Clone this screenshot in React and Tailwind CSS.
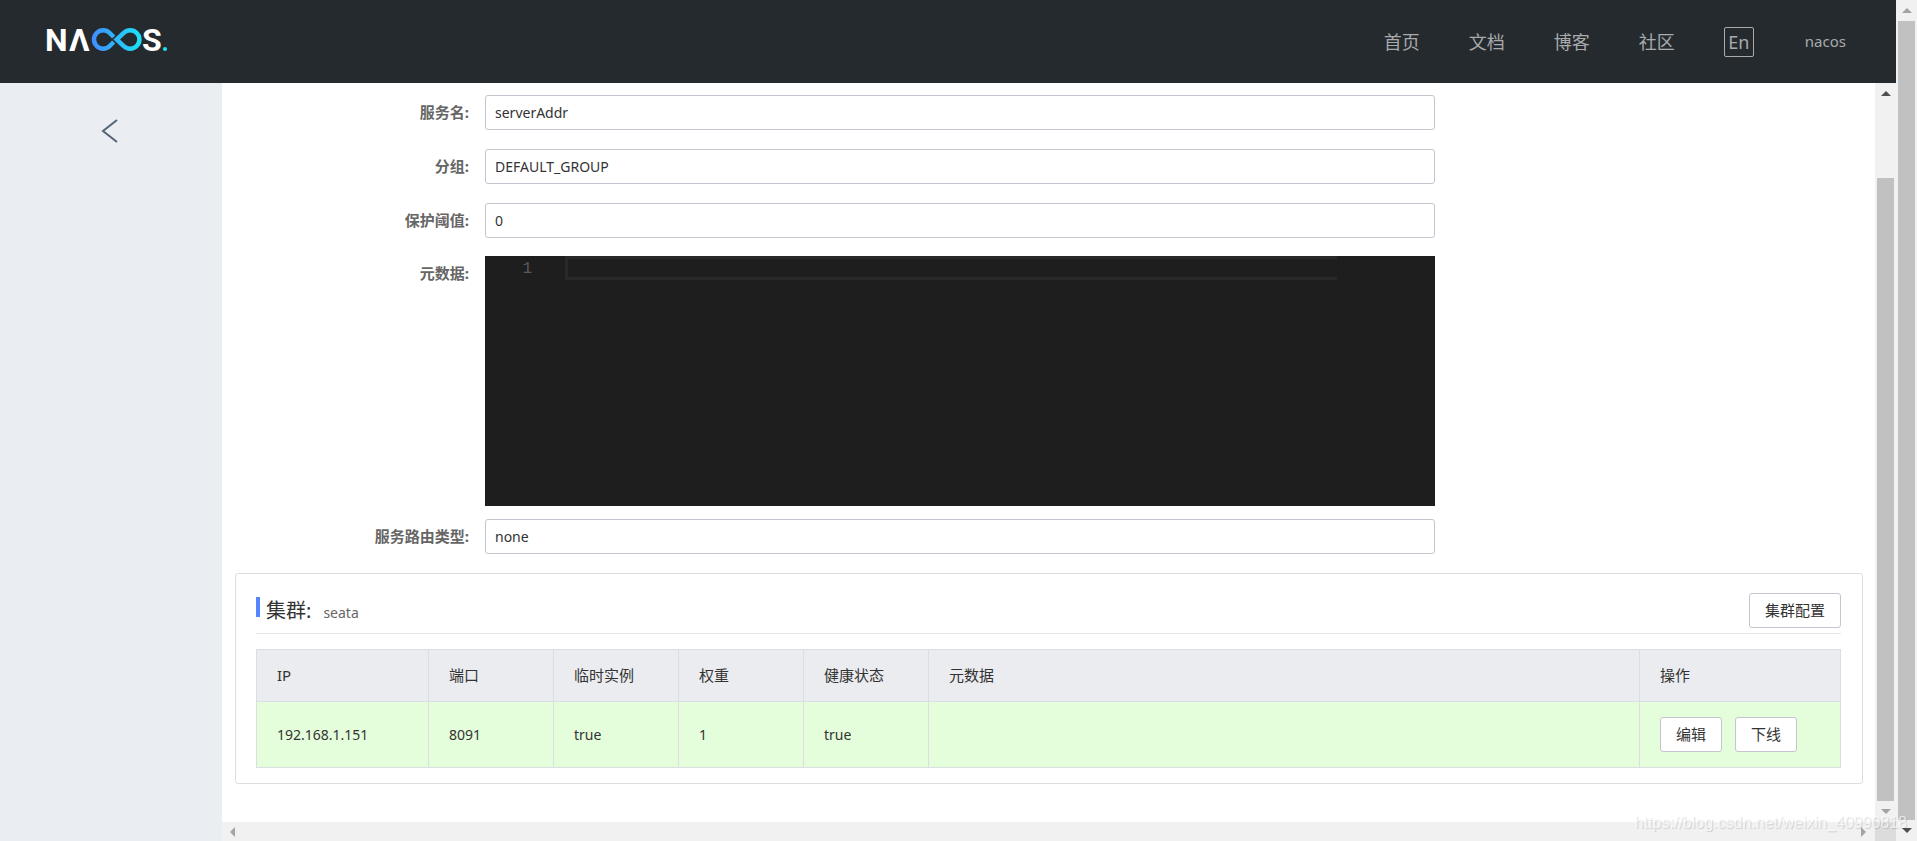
import { useState } from 'react';
import clsx from 'clsx';

const navLinks = ['首页', '文档', '博客', '社区'];

const columns = [
  { title: 'IP', width: 'w-[172px]' },
  { title: '端口', width: 'w-[125px]' },
  { title: '临时实例', width: 'w-[125px]' },
  { title: '权重', width: 'w-[125px]' },
  { title: '健康状态', width: 'w-[125px]' },
  { title: '元数据', width: '' },
  { title: '操作', width: 'w-[201px]' },
];

const instances = [
  { ip: '192.168.1.151', port: 8091, ephemeral: true, weight: 1, healthy: true, metadata: '' },
];

function Logo() {
  return (
    <svg width="126" height="46" viewBox="-2 -8 126 46" role="img" aria-label="NACOS.">
      <defs>
        <linearGradient id="loop" gradientUnits="userSpaceOnUse" x1="46" y1="0" x2="96" y2="0">
          <stop offset="0" stopColor="#418cff" />
          <stop offset="1" stopColor="#1ae5f7" />
        </linearGradient>
      </defs>
      <g fill="#fff" fontFamily="Roboto, sans-serif" fontSize="32" fontWeight="700">
        <text x="-1" y="24">N</text>
        <text x="23" y="24">Λ</text>
        <text x="96" y="24">S</text>
      </g>
      <g fill="none" stroke="url(#loop)" strokeWidth="4.5">
        <path d="M67.7 10 L63.7 6 A9.2 9.2 0 1 0 63.7 19 L67.7 15" />
        <path d="M70.7 12.5 L77.7 6 A9.2 9.2 0 1 1 77.7 19 Z" />
      </g>
      <circle cx="119" cy="22" r="2" fill="#1ae5f7" />
    </svg>
  );
}

function Header() {
  return (
    <header className="flex h-[83px] shrink-0 items-center justify-between bg-[#252a2f] pr-12 pl-11">
      <a href="#">
        <Logo />
      </a>
      <nav className="flex items-center gap-[49px] text-lg text-[#a8aaac]">
        {navLinks.map((text) => (
          <a key={text} href="#">{text}</a>
        ))}
        <button className="h-[30px] w-[30px] rounded-xs border border-[#a8aaac] leading-6">En</button>
        <a href="#" className="px-0.5 text-[15px]">nacos</a>
      </nav>
    </header>
  );
}

function Arrow({ dir, dark }) {
  const points = {
    up: '4,10 9,5 14,10',
    down: '4,5 14,5 9,10',
    left: '11,4 11,14 6,9',
    right: '6,4 11,9 6,14',
  };
  return (
    <svg
      width="18"
      height={dir === 'up' || dir === 'down' ? 15 : 18}
      className={clsx('shrink-0', dark ? 'fill-[#505050]' : 'fill-[#a3a3a3]')}
    >
      <polygon points={points[dir]} />
    </svg>
  );
}

function VerticalBar({ scrolled }) {
  return (
    <div className="flex w-[21px] shrink-0 flex-col items-center bg-[#f1f1f1]">
      <div className="flex h-[21px] shrink-0 items-center">
        <Arrow dir="up" dark={scrolled} />
      </div>
      <div className="flex w-[17px] flex-1 flex-col">
        {scrolled && <div className="grow-[74]" />}
        <div className="grow-[623] bg-[#c1c1c1]" />
      </div>
      <div className="flex h-[21px] shrink-0 items-center">
        <Arrow dir="down" dark={!scrolled} />
      </div>
    </div>
  );
}

function FormRow({ id, label, children }) {
  return (
    <div className="flex">
      <label htmlFor={id} className="w-[250px] shrink-0 pr-4 text-right text-[15px] leading-[35px] font-bold text-[#666]">
        {label}:
      </label>
      <div className="w-7/12">{children}</div>
    </div>
  );
}

function TextField({ id, label, value }) {
  return (
    <FormRow id={id} label={label}>
      <input
        id={id}
        readOnly
        value={value}
        className="block h-[35px] w-full rounded-[3px] border border-[#c4c6cf] px-[9px] text-sm text-[#333] outline-none"
      />
    </FormRow>
  );
}

function MetadataEditor() {
  const [text, setText] = useState('');
  return (
    <div className="flex h-[250px] bg-[#1e1e1e] font-['Liberation_Mono',monospace] text-base leading-[26px]">
      <div className="w-20 pr-[33px] text-right text-[#5a5a5a]">1</div>
      <textarea
        id="metadata"
        rows={1}
        value={text}
        onChange={(e) => setText(e.target.value)}
        className="h-6 flex-1 resize-none overflow-hidden border-y-3 border-l-3 border-[#282828] leading-[18px] text-[#d4d4d4] outline-none"
      />
      <div className="w-[98px]" />
    </div>
  );
}

function Button({ children }) {
  return (
    <button className="h-[35px] rounded-[3px] border border-[#c4c6cf] bg-white px-[15px] text-[15px] text-[#333]">
      {children}
    </button>
  );
}

function ClusterCard() {
  return (
    <section className="rounded-[3px] border border-[#dcdee3] pt-[19px] pr-[21px] pb-[15px] pl-5">
      <div className="flex items-start justify-between border-b border-[#e6e7eb] pb-[5px]">
        <h2 className="flex items-baseline pt-1 text-[#333]">
          <span className="mr-1.5 h-5 w-1 self-start bg-[#5584ff]" />
          <span className="text-xl">集群:</span>
          <span className="ml-3 text-sm text-[#666]">seata</span>
        </h2>
        <Button>集群配置</Button>
      </div>

      <table className="mt-[15px] w-full table-fixed border-collapse text-left text-[#333]">
        <thead className="bg-[#ebecf0] text-[15px]">
          <tr className="h-[52px]">
            {columns.map((col) => (
              <th key={col.title} className={clsx('border border-[#dcdee3] pl-5 font-normal', col.width)}>
                {col.title}
              </th>
            ))}
          </tr>
        </thead>
        <tbody className="bg-[#e4fdda] text-sm">
          {instances.map((item) => (
            <tr key={item.ip} className="h-[66px]">
              <td className="border border-[#dcdee3] pl-5">{item.ip}</td>
              <td className="border border-[#dcdee3] pl-5">{item.port}</td>
              <td className="border border-[#dcdee3] pl-5">{String(item.ephemeral)}</td>
              <td className="border border-[#dcdee3] pl-5">{item.weight}</td>
              <td className="border border-[#dcdee3] pl-5">{String(item.healthy)}</td>
              <td className="border border-[#dcdee3] pl-5">{item.metadata}</td>
              <td className="border border-[#dcdee3] pl-5">
                <div className="flex gap-[13px]">
                  <Button>编辑</Button>
                  <Button>下线</Button>
                </div>
              </td>
            </tr>
          ))}
        </tbody>
      </table>
    </section>
  );
}

export default function App() {
  return (
    <div className="relative flex h-screen overflow-hidden bg-white font-['Noto_Sans','Noto_Sans_CJK_SC',sans-serif]">
      <div className="flex min-w-0 flex-1 flex-col">
        <Header />
        <div className="flex min-h-0 flex-1">
          {/* Collapsed side menu */}
          <aside className="w-[222px] shrink-0 bg-[#eaedf1] pt-9 pr-0.5 text-center">
            <button aria-label="返回">
              <svg width="18" height="24" viewBox="0 0 18 24" fill="none" stroke="#546478" strokeWidth="2">
                <path d="M16 1 L2 12 L16 23" />
              </svg>
            </button>
          </aside>

          {/* Service detail */}
          <div className="flex min-w-0 flex-1 flex-col">
            <div className="flex min-h-0 flex-1">
              <main className="min-w-0 flex-1 overflow-hidden px-3 pt-3 pl-[13px]">
                <form className="mb-[19px]">
                  <div className="mb-[18px] flex flex-col gap-[19px]">
                    <TextField id="name" label="服务名" value="serverAddr" />
                    <TextField id="group" label="分组" value="DEFAULT_GROUP" />
                    <TextField id="threshold" label="保护阈值" value="0" />
                  </div>
                  <div className="flex flex-col gap-[13px]">
                    <FormRow id="metadata" label="元数据">
                      <MetadataEditor />
                    </FormRow>
                    <TextField id="selector" label="服务路由类型" value="none" />
                  </div>
                </form>
                <ClusterCard />
              </main>
              <VerticalBar scrolled />
            </div>
            <div className="flex h-[19px] shrink-0 bg-[#f1f1f1]">
              <div className="flex flex-1 items-center justify-between px-0.5">
                <Arrow dir="left" />
                <Arrow dir="right" />
              </div>
              <div className="w-[21px] bg-[#dcdcdc]" />
            </div>
          </div>
        </div>
      </div>
      <VerticalBar />

      <div className="pointer-events-none absolute right-2.5 bottom-1.5 font-['Liberation_Sans',sans-serif] text-base text-white/70 [text-shadow:1px_1px_1px_#00000026]">
        https://blog.csdn.net/weixin_40990818
      </div>
    </div>
  );
}
